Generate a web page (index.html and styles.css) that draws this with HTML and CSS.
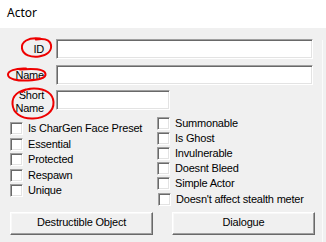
FILE: index.html
```html
<!DOCTYPE html>
<html>
<head>
<meta charset="utf-8">
<link rel="stylesheet" href="styles.css">
</head>
<body>
<div class="window">
  <div class="title">Actor</div>
  <div class="panel">
    <div class="main">
      <div class="field-row row-id"><span class="lbl">ID</span><div class="edit wide"></div></div>
      <div class="field-row row-name"><span class="lbl">Name</span><div class="edit wide"></div></div>
      <div class="field-row row-short"><span class="lbl two">Short<br>Name</span><div class="edit short"></div></div>
      <div class="checks">
        <div class="col col-left">
          <div class="chk-row"><span class="box"></span><span>Is CharGen Face Preset</span></div>
          <div class="chk-row"><span class="box"></span><span>Essential</span></div>
          <div class="chk-row"><span class="box"></span><span>Protected</span></div>
          <div class="chk-row"><span class="box"></span><span>Respawn</span></div>
          <div class="chk-row"><span class="box"></span><span>Unique</span></div>
        </div>
        <div class="col col-right">
          <div class="chk-row"><span class="box"></span><span>Summonable</span></div>
          <div class="chk-row"><span class="box"></span><span>Is Ghost</span></div>
          <div class="chk-row"><span class="box"></span><span>Invulnerable</span></div>
          <div class="chk-row"><span class="box"></span><span>Doesnt Bleed</span></div>
          <div class="chk-row"><span class="box"></span><span>Simple Actor</span></div>
          <div class="chk-row last"><span class="box"></span><span>Doesn't affect stealth meter</span></div>
        </div>
      </div>
      <div class="buttons">
        <button class="btn">Destructible Object</button>
        <button class="btn">Dialogue</button>
      </div>
    </div>
    <div class="edge"></div>
  </div>
  <svg class="marks" width="326" height="242" viewBox="0 0 326 242">
    <path d="M40 38.5 C28 37 21 42 22 48.5 C23 55 31 57.5 39 56.5 C47 55.5 52 51 51 45 C50 40 45 38 36 39.5" />
    <path d="M26 68.5 C15 68 7.5 71 8 75 C8.5 79 17 81 28 80.5 C39 80 46 78 45.5 74 C45 70 37 68 20 69.5" />
    <path d="M30 89 C18 90 12 96 12.5 104 C13 113 21 119 33 118.5 C46 118 54 111 53.5 102 C53 94 46 88.5 34 88.5 C28 88.5 24 90 22 92" />
  </svg>
</div>
</body>
</html>
```

FILE: styles.css
```css
html, body {
  margin: 0;
  padding: 0;
}

body {
  width: 326px;
  height: 242px;
  overflow: hidden;
  background: #f0f0f0;
  font-family: "Liberation Sans", Arial, sans-serif;
  font-size: 11px;
  line-height: 13px;
  color: #000;
}

.window {
  position: relative;
  width: 326px;
  height: 242px;
}

.title {
  box-sizing: border-box;
  height: 28px;
  padding: 5px 0 0 7px;
  background: #fff;
  font-family: "Noto Sans", "Open Sans", sans-serif;
  font-size: 12px;
  line-height: 16px;
  color: #000;
}

.panel {
  display: flex;
  height: 214px;
  background: #f0f0f0;
}

.main {
  width: 322px;
  flex: none;
}

.edge {
  flex: 1;
  margin-top: 12px;
  border-left: 1px solid #fbfbfb;
}

.field-row {
  display: flex;
  align-items: center;
  height: 20px;
}

.row-id { margin-top: 11px; }
.row-name { margin-top: 6px; }
.row-short {
  margin-top: 5px;
  align-items: flex-start;
  height: auto;
}

.lbl {
  width: 44px;
  padding-right: 12px;
  flex: none;
  text-align: right;
  letter-spacing: -0.2px;
}

.lbl.two {
  margin-top: -1px;
}

.edit {
  box-sizing: border-box;
  height: 20px;
  background: #fff;
  border: 1px solid;
  border-color: #a0a0a0 #fff #fff #a0a0a0;
  box-shadow: inset 1px 1px #696969, inset -1px -1px #e3e3e3;
  flex: none;
}

.wide { width: 257px; }
.short { width: 114px; }

.checks {
  display: flex;
  align-items: flex-start;
  margin-top: 2px;
  padding-left: 10px;
}

.col {
  display: flex;
  flex-direction: column;
}

.col-left {
  width: 147px;
  margin-top: 5px;
  gap: 2.5px;
}

.col-right {
  gap: 2px;
}

.chk-row {
  display: flex;
  align-items: center;
  gap: 5px;
  height: 13px;
  letter-spacing: -0.2px;
  white-space: nowrap;
}

.chk-row.last {
  margin-top: 1px;
  padding-left: 1px;
}

.box {
  box-sizing: border-box;
  width: 13px;
  height: 13px;
  flex: none;
  background: #fff;
  border: 1px solid;
  border-color: #a0a0a0 #fff #fff #a0a0a0;
  box-shadow: inset 1px 1px #696969, inset -1px -1px #e3e3e3;
}

.buttons {
  display: flex;
  gap: 19px;
  margin-top: 6px;
  padding-left: 10px;
}

.btn {
  box-sizing: border-box;
  width: 143px;
  height: 23px;
  margin: 0;
  padding: 0 0 2px;
  background: #f0f0f0;
  border: 1px solid;
  border-color: #fff #696969 #696969 #fff;
  box-shadow: inset -1px -1px #a0a0a0, inset 1px 1px #f8f8f8;
  border-radius: 0;
  font-family: "Liberation Sans", Arial, sans-serif;
  font-size: 11px;
  line-height: 13px;
  letter-spacing: -0.2px;
  color: #000;
}

.marks {
  position: absolute;
  left: 0;
  top: 0;
  pointer-events: none;
  fill: none;
  stroke: #ee0000;
  stroke-width: 2;
  stroke-linecap: round;
}
```
